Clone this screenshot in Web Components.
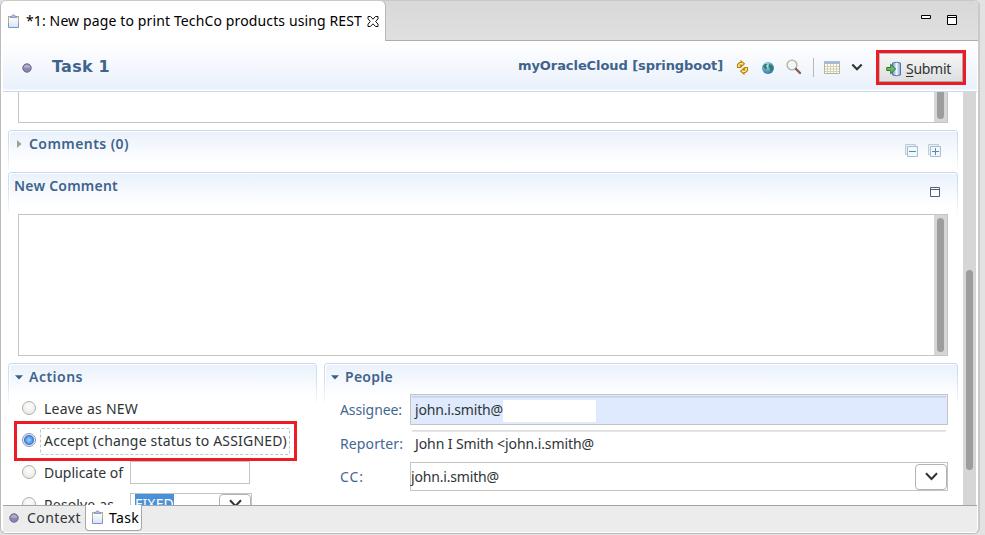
<!DOCTYPE html>
<html lang="en"><head><meta charset="utf-8"><title>Task 1</title>
<style>body{margin:0;background:#e2e2e2;font:14px/20px "Noto Sans","Open Sans",sans-serif;color:#2e3436;overflow:hidden}</style></head>
<body><task-window></task-window>
<script>
const define=(name,html,init)=>customElements.define(name,class extends HTMLElement{
  constructor(){super();const t=document.createElement('template');t.innerHTML=html;
    this.attachShadow({mode:'open'}).append(t.content.cloneNode(true));}
  connectedCallback(){if(init)init.call(this);}
});

// Text run whose tracking is adjusted to fill the width in "w".
define('ui-text',`<style>:host{display:inline-block;white-space:pre;flex:none}span{display:inline-block}</style><span><slot></slot></span>`,function(){
  const w=+this.getAttribute('w'),s=this.shadowRoot.querySelector('span');
  if(!w)return;
  const n=[...this.textContent].length;
  s.style.letterSpacing=(w-s.getBoundingClientRect().width)/n+'px';
  this.style.width=w+'px';
});

const icons={
clip:[13,15,`<defs><linearGradient id="a" x2="0" y2="1"><stop stop-color="#fff"/><stop offset="1" stop-color="#d5e4f8"/></linearGradient></defs><path d="M1.5 2.5h10v11h-10z" fill="url(#a)" stroke="#7f94bf"/><path d="M1.5 9V2.5h2M11.500 9V2.500h-2" fill="none" stroke="#b9ab7c"/><path d="M3 2.500h1.500l1-1.500h2l1 1.500H10v1H3z" fill="#a9bbdc" stroke="#8ba0c8"/>`],
close:[12,11,`<path d="M1 .5h2.500L6 3.200 8.500.5H11v2.300L8.700 5.500 11 8.200v2.300H8.500L6 7.800 3.500 10.500H1V8.200l2.300-2.700L1 2.800z" fill="#fff" stroke="#111"/>`],
dot:[10,10,`<circle cx="5" cy="5" r="4.200" fill="#8a87b0" stroke="#625c8b" stroke-width=".9"/><path d="M1.800 4.800a3.200 3 0 0 1 6.400 0z" fill="#aeb0c4"/>`],
sync:[13,15,`<g fill="#ffe69a" stroke="#bd8106" stroke-linejoin="miter" stroke-width="1.100"><path d="M1.500 7.500V4.500l2-2H5V.900l3.400 2.900L5.500 6.500V5H4.300v2.500z"/><path d="M11.500 7.500v3l-2 2H8v1.600l-3.400-2.900L7.500 8.500V10h1.200V7.500z"/></g>`],
globe:[14,14,`<defs><radialGradient id="a" cx=".4" cy=".3" r=".8"><stop stop-color="#c3e4f1"/><stop offset=".55" stop-color="#5b9cc6"/><stop offset="1" stop-color="#30679b"/></radialGradient></defs><circle cx="7" cy="7" r="6" fill="url(#a)"/><path d="M2 5l2-2 2.500 0-1.500 2 1 1.500-1 2.500-2-2zM8 3l3 1 1.500 3-1.500 3-1.500 1-.5-3-1.500-2z" fill="#2f806c"/>`],
search:[16,16,`<circle cx="6" cy="6" r="4.900" fill="#f1f5f8" stroke="#b8b39f" stroke-width="1.400"/><path d="M3.500 5a3 3 0 0 1 3-2" stroke="#fff" fill="none" stroke-width="1.500"/><path d="M10 10l4 4" stroke="#8a5a52" stroke-width="2.400" stroke-linecap="round"/>`],
cal:[16,13,`<path d="M.5.500h15v12H.500z" fill="#fffdf4" stroke="#b5b5a4"/><path d="M0 0h16v3H0z" fill="#a9bbd3"/><path d="M1 5.500h14M1 8h14M1 10.500h14M3.500 3v9M6.500 3v9M9.500 3v9M12.500 3v9" stroke="#d2cfba"/>`],
chev:[12,8,`<path d="M1.300 1.500L6 6.200l4.700-4.700" fill="none" stroke="#2e3436" stroke-width="2.100"/>`],
bigchev:[13,9,`<path d="M1 1.200L6.500 7 12 1.200" fill="none" stroke="#2e3436" stroke-width="2"/>`],
submit:[16,16,`<defs><linearGradient id="a"><stop stop-color="#6b94cb"/><stop offset=".5" stop-color="#f0f7ff"/><stop offset="1" stop-color="#7fa3d5"/></linearGradient></defs><path d="M6.500 2q4-1.500 8 0v12q-4 1.500-8 0z" fill="url(#a)" stroke="#4c78b4"/><path d="M.7 6.500h4V3.300L9.700 8l-5 4.700V9.500h-4z" fill="#6db76a" stroke="#2d7a36"/>`],
min:[11,5,`<path d="M.5.500h9v3h-9z" fill="#fff" stroke="#000"/>`],
max:[10,10,`<path d="M.5.500h9v9h-9zM1 2.500h8" fill="#fff" stroke="currentColor"/>`],
collapse:[14,14,`<path d="M.5.500h10v10H.500z" fill="#e7f0f7" stroke="#bfcddb"/><path d="M2.500 2.500h10v10h-10z" fill="#eff8fd" stroke="#aabccd"/><path d="M4 7.500h7" stroke="#558bad"/>`],
expand:[14,14,`<path d="M.5.500h10v10H.500z" fill="#e7f0f7" stroke="#bfcddb"/><path d="M2.500 2.500h10v10h-10z" fill="#eff8fd" stroke="#aabccd"/><path d="M4 7.500h7M7.500 4v7" stroke="#558bad"/>`],
right:[5,8,`<path d="M0 0l4.500 4L0 8z" fill="#a0a0a0"/>`],
down:[8,5,`<path d="M0 .3h8L4 4.500z" fill="#3b5f86"/>`]
};
define('ui-icon',`<style>:host{display:block;flex:none}svg{display:block}</style>`,function(){
  const [w,h,p]=icons[this.getAttribute('name')];
  this.shadowRoot.innerHTML+=`<svg width="${w}" height="${h}" viewBox="0 0 ${w} ${h}">${p}</svg>`;
});

define('scroll-track',`<style>:host{display:flex;flex-direction:column;box-sizing:border-box;background:#d6d6d6;width:13px;padding:3px;padding-top:var(--start,3px)}
i{display:block;flex:none;height:var(--len);background:#9b9d9e;border-radius:var(--cap,4px) var(--cap,4px) 4px 4px}</style><i></i>`);

define('text-area',`<style>:host{display:flex;justify-content:flex-end;box-sizing:border-box;border:1px solid #c4c4c4;background:#fff;margin:0 15px}</style><slot></slot>`);

define('form-section',`<style>:host{display:block;box-sizing:border-box}
.h{height:44px;box-sizing:border-box;border:1px solid transparent;border-bottom:0;border-radius:4px 4px 0 0;
background:linear-gradient(#eaf1fb,#fff 32px) padding-box,linear-gradient(#c3daf0,#d6e6f8 50%,#fff) border-box;box-shadow:inset 1px 1px #fff;
display:flex;justify-content:space-between;padding:3px 15px 0 5px;font-weight:600;color:#3f648c}
.t{display:flex;height:20px}.a{display:flex;align-items:flex-start;gap:9px;padding-top:var(--at,10px)}</style>
<div class="h"><div class="t"><slot name="title"></slot></div><div class="a"><slot name="tools"></slot></div></div><slot></slot>`);

define('radio-row',`<style>:host{display:flex;height:32px;align-items:center;padding-left:14px}
i{width:12px;height:12px;flex:none;border:1px solid #b0b1ac;border-radius:50%;background:radial-gradient(circle at 50% 35%,#fff,#e3e4dd);margin:-2px 8px 0 0}
:host([on]) i{border-color:#8798b3;background:radial-gradient(circle,#a6d6ff 0,#5aa2f2 3px,#3a78cb 4.500px,#e8eefa 5.500px)}</style><i></i><slot></slot>`);

define('combo-button',`<style>:host{display:flex;justify-content:center;box-sizing:border-box;border:1px solid #b3b3b3;border-radius:4px;background:#fff}</style><slot></slot>`);

define('person-row',`<style>:host{display:flex;align-items:center;padding-left:16px}
.l{width:70px;flex:none;color:#436791}.f{flex:1;height:var(--fh,31px);box-sizing:border-box;border:1px solid #c4c4c4;display:flex;align-items:center;padding-left:var(--pl,4px)}
:host([fill]) .f{background:linear-gradient(#c3cfe4,#d3ddf2) 1px 1px/calc(100% - 2px) 2px no-repeat,#e0eafe}
:host([plain]) .f{border-color:transparent;background:linear-gradient(#d9d9d9,#ececec) 1px 1px/calc(100% - 2px) 2px no-repeat}</style>
<div class="l"><slot name="label"></slot></div><div class="f"><slot></slot></div>`);

define('task-window',`<style>
:host{display:block;width:985px;height:535px;overflow:hidden;background:#e2e2e2}
.win{width:980px;height:534px;box-sizing:border-box;border:1px solid #bcbcbc;border-top-color:#c9c9c9;border-right:2px solid #cacaca;border-radius:6px;background:#fff;overflow:hidden;display:flex;flex-direction:column}
.tabs{height:41px;flex:none;display:flex;margin:-1px 0 0 -1px;background:linear-gradient(#d8d8d8,#e0e0e0)}
.tab{width:386px;box-sizing:border-box;border:1px solid #b8b8b8;border-bottom:0;border-top-color:#c9c9c9;border-radius:6px 6px 0 0;background:#fff;display:flex;align-items:center;padding:1px 0 0 6px;color:#000}
.tools{flex:1;border-bottom:1px solid #adadad;border-top:1px solid #c9c9c9;display:flex;justify-content:flex-end;align-items:flex-start;padding:14px 21px 0 0;box-sizing:border-box}
.head{height:51px;box-sizing:border-box;flex:none;margin:0 1px 0 2px;border-bottom:1px solid #c7daeb;background:linear-gradient(#fff,#eaf1fb 48px,#fff 49px);display:flex;align-items:center;padding:3px 11px 0 19px;font:bold 16px/20px "DejaVu Sans",sans-serif;color:#3f648c}
.sub{display:flex;align-items:center;width:90px;height:35px;box-sizing:border-box;border:3px solid #ed1c24;background:linear-gradient(#f7f7f7,#dedede);box-shadow:inset -1px -1px #aaa,inset 1px 1px #bbb;color:#2e3436;font:14px/20px "Noto Sans",sans-serif;padding:3px 0 0 7px;margin:0 0 0 14px}
.sub u{text-underline-offset:2px}
.body{height:413px;flex:none;display:flex;overflow:hidden;margin:0 1px 0 2px}
.form{width:960px;height:440px;flex:none;box-sizing:border-box;padding-left:0}
.cut{height:31px;border-top:0}
.cols{display:flex;gap:7px;padding-left:5px;margin-top:7px}
.red{display:flex;align-items:center;box-sizing:border-box;border:3px solid #ed1c24;height:40px;width:283px;margin:-4px 0 -4px 6px}
.red radio-row{padding-left:5px}
.focus{border:1px dashed #c4c4c4;height:27px;width:250px;box-sizing:border-box;margin:0 0 0 -4px;padding:3px 0 0 3px;display:flex;border-radius:2px}
.inp{height:23px;border:1px solid #c4c4c4;box-sizing:border-box;margin-top:-1px}
.bot{height:29px;flex:none;margin:0 1px 0 2px;border-top:1px solid #a2a5a5;box-sizing:border-box;display:flex;background:linear-gradient(#ececec 26px,#fff 26px);padding-left:6px;line-height:20px}
.bt{box-sizing:border-box;width:57px;height:26px;margin:-1px 0 0 4px;background:#fff;border:1px solid #a5a8a8;border-top:0;border-radius:0 0 4px 4px;display:flex;align-items:center;padding:0 0 0 5px;color:#000}
</style>
<div class="win">
<div class="tabs"><div class="tab"><ui-icon name="clip"></ui-icon><ui-text w="336" style="margin:-1px 5px 0 6px">*1: New page to print TechCo products using REST</ui-text><ui-icon name="close"></ui-icon></div>
<div class="tools"><ui-icon name="min"></ui-icon><ui-icon name="max" style="margin-left:15px;color:#000"></ui-icon></div></div>
<div class="head"><ui-icon name="dot"></ui-icon><ui-text w="58" style="margin:-1px auto 0 20px">Task 1</ui-text>
<ui-text w="205" style="font-size:13px;margin:-3px 13px 0 0">myOracleCloud [springboot]</ui-text><ui-icon name="sync" style="margin-top:-1px"></ui-icon><ui-icon name="globe" style="margin:0 11px 0 12px"></ui-icon><ui-icon name="search" style="margin-top:-1px"></ui-icon>
<span style="width:1px;height:19px;background:#b8b8b8;margin:0 10px 0 11px"></span><ui-icon name="cal" style="margin-top:-1px"></ui-icon><ui-icon name="chev" style="margin:-1px 0 0 11px"></ui-icon>
<div class="sub" style="margin-left:13px"><ui-icon name="submit" style="margin-top:-1px"></ui-icon><ui-text w="45" style="margin-left:4px"><u>S</u>ubmit</ui-text></div></div>
<div class="body"><div class="form">
<text-area class="cut" style="margin-right:15px"><scroll-track style="--start:0px;--len:27px;--cap:0px"></scroll-track></text-area>
<form-section style="margin:7px 5px 0 5px;height:42px;--at:10px"><ui-icon slot="title" name="right" style="margin:6px 7px 0 3px"></ui-icon><ui-text slot="title" w="100">Comments (0)</ui-text><ui-icon slot="tools" name="collapse"></ui-icon><ui-icon slot="tools" name="expand"></ui-icon></form-section>
<form-section style="margin:0 5px;height:42px;--at:11px"><ui-text slot="title" w="104">New Comment</ui-text><ui-icon slot="tools" name="max" style="color:#4c607f;margin-right:2px"></ui-icon></form-section>
<text-area style="height:142px"><scroll-track style="--len:134px"></scroll-track></text-area>
<div class="cols">
<form-section style="width:309px;height:150px"><ui-icon slot="title" name="down" style="margin:8px 6px 0 1px"></ui-icon><ui-text slot="title" w="54">Actions</ui-text>
<div style="margin-top:-14px">
<radio-row><ui-text w="94">Leave as NEW</ui-text></radio-row>
<div class="red"><radio-row on><div class="focus"><ui-text w="243" style="margin-top:-1px">Accept (change status to ASSIGNED)</ui-text></div></radio-row></div>
<radio-row><ui-text w="79">Duplicate of</ui-text><div class="inp" style="width:120px;margin-left:7px"></div></radio-row>
<radio-row><ui-text w="70">Resolve as</ui-text><div class="inp" style="width:122px;margin-left:16px;display:flex;justify-content:space-between"><ui-text w="39" style="background:#4a90d9;color:#fff;margin-left:4px;height:20px">FIXED</ui-text><combo-button style="width:32px;padding-top:4px"><ui-icon name="bigchev"></ui-icon></combo-button></div></radio-row>
</div></form-section>
<form-section style="width:634px;height:150px"><ui-icon slot="title" name="down" style="margin:8px 6px 0 1px"></ui-icon><ui-text slot="title" w="48">People</ui-text>
<div style="margin:-13px 10px 0 0">
<person-row fill><ui-text slot="label" w="62">Assignee:</ui-text><ui-text w="88">john.i.smith@</ui-text><span style="width:93px;height:22px;background:#fff;margin-top:2px"></span></person-row>
<person-row plain style="margin-top:3px"><ui-text slot="label" w="63">Reporter:</ui-text><ui-text w="179">John I Smith &lt;john.i.smith@</ui-text></person-row>
<person-row style="margin-top:3px;--fh:29px;--pl:0px"><ui-text slot="label" w="24">CC:</ui-text><ui-text w="88" style="margin-right:auto">john.i.smith@</ui-text><combo-button style="width:32px;height:26px;padding-top:7px;margin-top:0"><ui-icon name="bigchev"></ui-icon></combo-button></person-row>
</div></form-section></div>
</div><scroll-track style="--start:178px;--len:200px"></scroll-track></div>
<div class="bot"><ui-icon name="dot" style="margin-top:7px"></ui-icon><ui-text w="54" style="margin:2px 0 0 8px">Context</ui-text><div class="bt"><ui-icon name="clip"></ui-icon><ui-text w="30" style="margin-left:5px">Task</ui-text></div></div>
</div>`);
</script></body></html>
